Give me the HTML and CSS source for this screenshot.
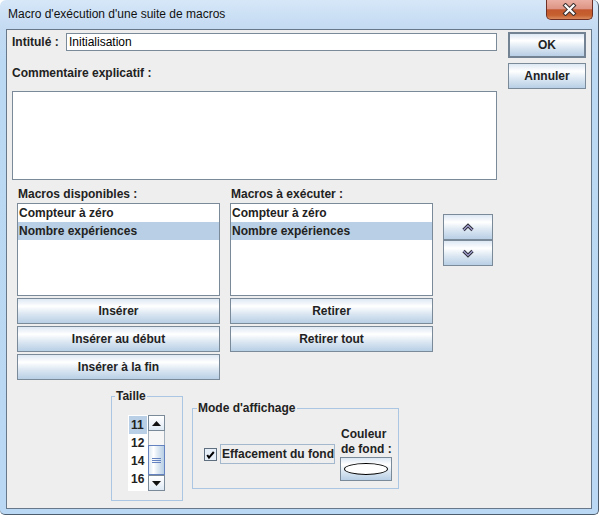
FILE: index.html
```html
<!DOCTYPE html>
<html lang="fr">
<head>
<meta charset="utf-8">
<title>Macro d'exécution d'une suite de macros</title>
<link rel="stylesheet" href="styles.css">
</head>
<body>
<div class="window">
  <div class="titlebar">
    <span class="title">Macro d'exécution d'une suite de macros</span>
    <div class="close">
      <svg width="15" height="13" viewBox="0 0 15 13"><path d="M3.5 2.5 L11.5 10.5 M11.5 2.5 L3.5 10.5" stroke="#3b3030" stroke-width="4.2" stroke-linecap="square" fill="none"/><path d="M3.5 2.5 L11.5 10.5 M11.5 2.5 L3.5 10.5" stroke="#ffffff" stroke-width="2.2" stroke-linecap="square" fill="none"/></svg>
    </div>
  </div>
  <div class="client">
    <div class="main">
      <div class="left">
        <div class="row-title">
          <span class="lbl lbl-intitule">Intitulé :</span>
          <div class="field">Initialisation</div>
        </div>
        <div class="lbl comment-lbl">Commentaire explicatif :</div>
        <div class="textarea"></div>
        <div class="lists">
          <div class="col">
            <div class="lbl col-lbl">Macros disponibles :</div>
            <div class="list">
              <div class="item">Compteur à zéro</div>
              <div class="item sel">Nombre expériences</div>
            </div>
            <div class="btns">
              <button class="btn">Insérer</button>
              <button class="btn">Insérer au début</button>
              <button class="btn">Insérer à la fin</button>
            </div>
          </div>
          <div class="col">
            <div class="lbl col-lbl">Macros à exécuter :</div>
            <div class="list">
              <div class="item">Compteur à zéro</div>
              <div class="item sel">Nombre expériences</div>
            </div>
            <div class="btns">
              <button class="btn">Retirer</button>
              <button class="btn">Retirer tout</button>
            </div>
          </div>
          <div class="arrows">
            <button class="btn arrow"><svg width="14" height="9" viewBox="0 0 14 9"><polyline points="2.5,7 7,2.5 11.5,7" fill="none" stroke="#2e2e3a" stroke-width="3.2"/><polyline points="2.5,7 7,2.5 11.5,7" fill="none" stroke="#a8a6d8" stroke-width="1.1"/></svg></button>
            <button class="btn arrow"><svg width="14" height="9" viewBox="0 0 14 9"><polyline points="2.5,2 7,6.5 11.5,2" fill="none" stroke="#2e2e3a" stroke-width="3.2"/><polyline points="2.5,2 7,6.5 11.5,2" fill="none" stroke="#a8a6d8" stroke-width="1.1"/></svg></button>
          </div>
        </div>
        <div class="bottom">
          <fieldset class="group taille">
            <legend>Taille</legend>
            <div class="gbody taille-body">
              <div class="sizes">
                <div class="size-items">
                  <div class="size sel">11</div>
                  <div class="size">12</div>
                  <div class="size">14</div>
                  <div class="size">16</div>
                </div>
                <div class="sbar">
                  <div class="sb-btn"><svg width="9" height="5" viewBox="0 0 9 5"><polygon points="0,5 4.5,0 9,5" fill="#111"/></svg></div>
                  <div class="sb-track"></div>
                  <div class="sb-thumb"><span class="grip"></span><span class="grip"></span><span class="grip"></span></div>
                  <div class="sb-btn"><svg width="9" height="5" viewBox="0 0 9 5"><polygon points="0,0 9,0 4.5,5" fill="#111"/></svg></div>
                </div>
              </div>
            </div>
          </fieldset>
          <fieldset class="group mode">
            <legend>Mode d'affichage</legend>
            <div class="gbody mode-body">
              <div class="check">
                <span class="box"><svg width="13" height="13" viewBox="0 0 13 13"><rect x="0.5" y="0.5" width="12" height="12" fill="#e6eef7" stroke="#5f6f7f"/><path d="M3.2 7 L5 9.6 L9.8 4" fill="none" stroke="#000" stroke-width="2"/></svg></span>
                <span class="chk-lbl">Effacement du fond</span>
              </div>
              <div class="couleur">
                <div class="couleur-lbl">Couleur<br>de fond :</div>
                <button class="btn color-btn"><span class="ellipse"></span></button>
              </div>
            </div>
          </fieldset>
        </div>
      </div>
      <div class="right">
        <button class="btn ok">OK</button>
        <button class="btn">Annuler</button>
      </div>
    </div>
  </div>
</div>
</body>
</html>
```
FILE: styles.css
```css
* { box-sizing: border-box; }

html, body {
  margin: 0;
  padding: 0;
  background: #ffffff;
}

body {
  width: 599px;
  height: 515px;
  overflow: hidden;
  font-family: "Liberation Sans", Arial, sans-serif;
  font-size: 12px;
  color: #222;
}

.window {
  width: 599px;
  height: 515px;
  display: flex;
  flex-direction: column;
  background: linear-gradient(to bottom, #d6e7f8 0, #c3daf2 29px, #bcd9f3 60px, #bad8f3 100%);
  border-right: 1px solid #4d5d6e;
  border-bottom: 1px solid #4d5d6e;
  border-radius: 6px 6px 5px 5px;
}

.titlebar {
  height: 29px;
  display: flex;
  align-items: flex-start;
  padding-left: 8px;
}

.title {
  flex: 1;
  line-height: 29px;
  font-size: 12px;
  color: #111;
  white-space: nowrap;
}

.close {
  width: 47px;
  height: 20px;
  margin-right: 5px;
  border: 1px solid #6e3024;
  border-top: none;
  border-radius: 0 0 5px 5px;
  background: linear-gradient(to bottom, #eab0a3 0, #dd9585 45%, #c3582f 52%, #c6612f 80%, #d98a5e 100%);
  display: flex;
  align-items: center;
  justify-content: center;
}

.close svg { display: block; }

.client {
  flex: 1;
  margin: 0 6px 5px 6px;
  border: 1px solid #66788a;
  background: #eeeeee;
  padding: 2px 5px 0 5px;
}

.main {
  display: flex;
  gap: 11px;
}

.left {
  width: 485px;
  margin-top: 1px;
}

.right {
  width: 78px;
  display: flex;
  flex-direction: column;
  gap: 5px;
}

.lbl {
  font-weight: bold;
  font-size: 12px;
  line-height: 14px;
  color: #222;
  white-space: nowrap;
}

.row-title {
  display: flex;
  align-items: center;
  height: 18px;
}

.lbl-intitule { width: 54px; }

.field {
  flex: 1;
  height: 18px;
  border: 1px solid #7a8a99;
  background: #ffffff;
  font-size: 12px;
  line-height: 16px;
  padding-left: 2px;
  color: #000;
}

.comment-lbl { margin-top: 15px; }

.textarea {
  margin-top: 11px;
  height: 89px;
  border: 1px solid #7a8a99;
  background: #ffffff;
}

.lists {
  display: flex;
  gap: 10px;
  margin-left: 5px;
  margin-top: 7px;
}

.col {
  width: 203px;
  display: flex;
  flex-direction: column;
}

.col-lbl {
  padding-left: 1px;
  margin-bottom: 2px;
}

.list {
  height: 93px;
  border: 1px solid #7a8a99;
  background: #ffffff;
}

.item {
  height: 18px;
  line-height: 18px;
  padding-left: 1px;
  font-weight: bold;
  font-size: 12px;
  color: #222;
  white-space: nowrap;
}

.sel { background: #b8cfe5; }

.btns {
  margin-top: 2px;
  display: flex;
  flex-direction: column;
  gap: 2px;
}

.btn {
  height: 26px;
  margin: 0;
  padding: 0;
  border: 1px solid #7a8a99;
  border-radius: 0;
  background: linear-gradient(to bottom, #dde8f3 0, #ffffff 30%, #dde8f3 60%, #b8cfe5 100%);
  font-family: "Liberation Sans", Arial, sans-serif;
  font-weight: bold;
  font-size: 12px;
  color: #222;
  display: flex;
  align-items: center;
  justify-content: center;
  white-space: nowrap;
}

.ok { border: 2px solid #738393; }

.arrows {
  width: 50px;
  margin-top: 27px;
  display: flex;
  flex-direction: column;
}

.arrow svg { display: block; }

.bottom {
  display: flex;
  align-items: flex-start;
  gap: 9px;
  margin-left: 99px;
  margin-top: 9px;
}

.group {
  margin: 0;
  padding: 0;
  border: 1px solid #aac6e2;
  min-width: 0;
}

.group legend {
  margin-left: 3px;
  padding: 0 1px;
  font-weight: bold;
  font-size: 12px;
  line-height: 14px;
  color: #222;
  white-space: nowrap;
}

.mode { margin-top: 12px; }
.mode legend { margin-left: 4px; }

.taille-body { padding: 12px 17px 9px 16px; }

.sizes {
  display: flex;
  width: 37px;
  height: 76px;
  background: #ffffff;
}

.size-items {
  width: 20px;
  padding: 1px;
}

.size {
  height: 18px;
  line-height: 18px;
  padding-left: 2px;
  font-weight: bold;
  font-size: 12px;
  color: #222;
}

.sbar {
  width: 17px;
  display: flex;
  flex-direction: column;
  background: #f6f6f6;
  border-left: 1px solid #a4b0bc;
  border-right: 1px solid #a4b0bc;
}

.sb-btn {
  height: 16px;
  border: 1px solid #7a8a99;
  margin: 0 -1px;
  background: linear-gradient(to bottom, #ffffff 0, #eef3f9 60%, #dde8f3 100%);
  display: flex;
  align-items: center;
  justify-content: center;
}

.sb-btn svg { display: block; }

.sb-track { height: 14px; }

.sb-thumb {
  height: 30px;
  margin: 0 -1px;
  border: 1px solid #6382bf;
  background: linear-gradient(to right, #dde8f3 0, #ffffff 30%, #dde8f3 60%, #b8cfe5 100%);
  display: flex;
  flex-direction: column;
  align-items: center;
  justify-content: center;
  gap: 1px;
}

.grip {
  display: block;
  width: 9px;
  height: 1px;
  background: #6382bf;
}

.mode-body {
  display: flex;
  align-items: center;
  padding: 12px 5px 7px 11px;
}

.check {
  display: flex;
  align-items: center;
  gap: 3px;
}

.box svg { display: block; }

.chk-lbl {
  height: 20px;
  border: 1px solid #a3b8cc;
  padding: 0 0 0 1px;
  font-weight: bold;
  font-size: 12px;
  line-height: 18px;
  color: #222;
  white-space: nowrap;
}

.couleur {
  width: 53px;
  margin-left: 5px;
  display: flex;
  flex-direction: column;
}

.couleur-lbl {
  font-weight: bold;
  font-size: 12px;
  line-height: 15px;
  padding-left: 1px;
  color: #222;
  white-space: nowrap;
}

.color-btn {
  width: 52px;
  height: 24px;
}

.ellipse {
  display: block;
  width: 44px;
  height: 12px;
  border: 1px solid #000;
  border-radius: 50%;
  background: #ffffff;
}
```
